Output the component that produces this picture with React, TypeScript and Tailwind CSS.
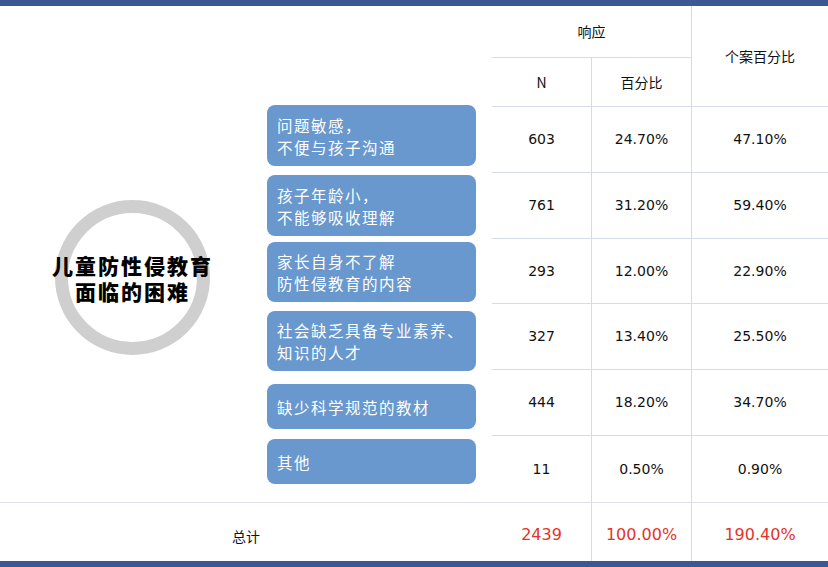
const rows = [
  {label: ['问题敏感，', '不便与孩子沟通'], n: '603', pct: '24.70%', cases: '47.10%'},
  {label: ['孩子年龄小，', '不能够吸收理解'], n: '761', pct: '31.20%', cases: '59.40%'},
  {label: ['家长自身不了解', '防性侵教育的内容'], n: '293', pct: '12.00%', cases: '22.90%'},
  {label: ['社会缺乏具备专业素养、', '知识的人才'], n: '327', pct: '13.40%', cases: '25.50%'},
  {label: ['缺少科学规范的教材'], n: '444', pct: '18.20%', cases: '34.70%'},
  {label: ['其他'], n: '11', pct: '0.50%', cases: '0.90%'},
];

// box geometry copied from the chart, the gaps are not regular
const boxes = [
  {mt: 'mt-[99px]', h: 'h-[61px]'},
  {mt: 'mt-[9px]', h: 'h-[61px]'},
  {mt: 'mt-[6px]', h: 'h-[60px]'},
  {mt: 'mt-[9px]', h: 'h-[60px]'},
  {mt: 'mt-[13px]', h: 'h-[45px]'},
  {mt: 'mt-[10px]', h: 'h-[45px]'},
];

const cjk = "font-['Noto_Sans_CJK_SC',sans-serif]";
const num = "font-['DejaVu_Sans','Noto_Sans_CJK_SC',sans-serif]";

export default function App() {
  return (
    <div className="w-[828px] h-[567px] bg-white flex flex-col overflow-hidden">
      <div className="h-[6px] bg-[#3b5893]" />

      <div className="flex h-[496px]">
        {/* left side: title ring + reason boxes */}
        <div className="w-[492px] flex">
          <div className="ml-[55px] mt-[194px] w-[155px] h-[155px] shrink-0 rounded-full border-[13px] border-[#d0cfd0] flex flex-col items-center justify-center">
            <span className={`${cjk} block whitespace-nowrap text-[21px] leading-[26px] font-black tracking-[2px] text-black`}>
              儿童防性侵教育
            </span>
            <span className={`${cjk} block whitespace-nowrap text-[21px] leading-[26px] font-black tracking-[2px] text-black`}>
              面临的困难
            </span>
          </div>

          <div className="ml-[57px] w-[209px] flex flex-col">
            {rows.map((r, i) => (
              <div
                key={i}
                className={`${boxes[i].mt} ${boxes[i].h} rounded-[8px] bg-[#6898cd] pl-[10px] flex flex-col justify-center ${cjk} text-[15.5px] leading-[22px] tracking-[1.5px] text-white`}
              >
                {r.label.map((l) => (
                  <span key={l} className="whitespace-nowrap">{l}</span>
                ))}
              </div>
            ))}
          </div>
        </div>

        {/* right side: table */}
        <div className="w-[336px] flex flex-col text-[14px] text-[#111]">
          <div className="grid grid-cols-[100px_100px_136px] grid-rows-[52px_48px] border-b border-[#d6dbe8]">
            <div className={`col-span-2 flex items-center justify-center border-r border-b border-[#d6dbe8] ${cjk}`}>响应</div>
            <div className={`row-span-2 flex items-center justify-center ${cjk}`}>个案百分比</div>
            <div className={`flex items-center justify-center border-r border-[#d6dbe8] ${cjk}`}>N</div>
            <div className={`flex items-center justify-center border-r border-[#d6dbe8] ${cjk}`}>百分比</div>
          </div>

          {rows.map((r, i) => (
            <div
              key={i}
              className={`grid grid-cols-[100px_100px_136px] h-[66px] ${i < rows.length - 1 ? 'border-b border-[#d6dbe8]' : ''} ${num}`}
            >
              <div className="flex items-center justify-center border-r border-[#d6dbe8]">{r.n}</div>
              <div className="flex items-center justify-center border-r border-[#d6dbe8]">{r.pct}</div>
              <div className="flex items-center justify-center">{r.cases}</div>
            </div>
          ))}
        </div>
      </div>

      {/* total */}
      <div className="flex h-[59px] border-t border-[#dcdfe6]">
        <div className={`w-[492px] flex items-center justify-center pt-[8px] text-[14px] text-[#111] ${cjk}`}>总计</div>
        <div className={`grid grid-cols-[100px_100px_136px] w-[336px] text-[16px] text-[#e5332a] ${num}`}>
          <div className="flex items-center justify-center pt-[5px] border-r border-[#d6dbe8]">2439</div>
          <div className="flex items-center justify-center pt-[5px] border-r border-[#d6dbe8]">100.00%</div>
          <div className="flex items-center justify-center pt-[5px]">190.40%</div>
        </div>
      </div>

      <div className="h-[6px] bg-[#3b5893]" />
    </div>
  );
}
